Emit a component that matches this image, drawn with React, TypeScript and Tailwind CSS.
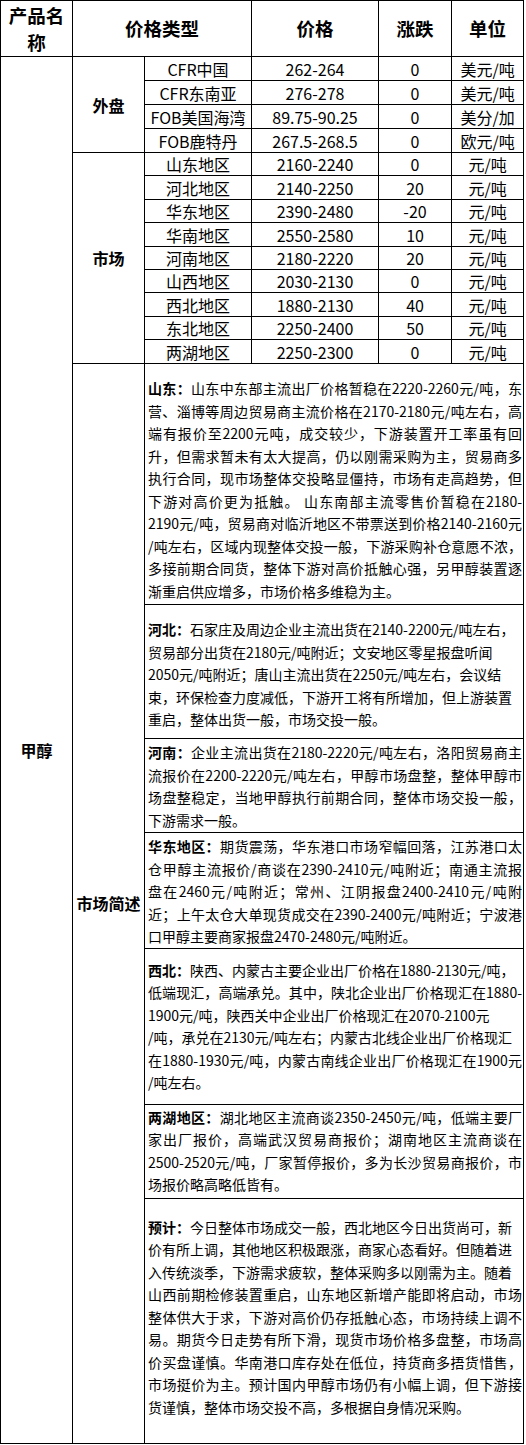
import React from "react";

type Line = [string, number];
type Para = { h: number; pt: number; label: string; lines: Line[] };

const waipan = [
  ["CFR中国", "262-264", "0", "美元/吨"],
  ["CFR东南亚", "276-278", "0", "美元/吨"],
  ["FOB美国海湾", "89.75-90.25", "0", "美分/加"],
  ["FOB鹿特丹", "267.5-268.5", "0", "欧元/吨"],
];

const shichang = [
  ["山东地区", "2160-2240", "0"],
  ["河北地区", "2140-2250", "20"],
  ["华东地区", "2390-2480", "-20"],
  ["华南地区", "2550-2580", "10"],
  ["河南地区", "2180-2220", "20"],
  ["山西地区", "2030-2130", "0"],
  ["西北地区", "1880-2130", "40"],
  ["东北地区", "2250-2400", "50"],
  ["两湖地区", "2250-2300", "0"],
];
const shichangH = [23, 24, 23, 24, 23, 23, 24, 23, 24];

const paras: Para[] = [
  {
    h: 241,
    pt: 13,
    label: "山东：",
    lines: [
      ["山东中东部主流出厂价格暂稳在2220-2260元/吨，东", 1],
      ["营、淄博等周边贸易商主流价格在2170-2180元/吨左右，高", 1],
      ["端有报价至2200元吨，成交较少，下游装置开工率虽有回", 1],
      ["升，但需求暂未有太大提高，仍以刚需采购为主，贸易商多", 1],
      ["执行合同，现市场整体交投略显僵持，市场有走高趋势，但", 1],
      ["下游对高价更为抵触。 山东南部主流零售价暂稳在2180-", 1],
      ["2190元/吨，贸易商对临沂地区不带票送到价格2140-2160元", 1],
      ["/吨左右，区域内现整体交投一般，下游采购补仓意愿不浓，", 1],
      ["多接前期合同货，整体下游对高价抵触心强，另甲醇装置逐", 1],
      ["渐重启供应增多，市场价格多维稳为主。", 0],
    ],
  },
  {
    h: 134,
    pt: 13,
    label: "河北：",
    lines: [
      ["石家庄及周边企业主流出货在2140-2200元/吨左右，", 0],
      ["贸易部分出货在2180元/吨附近；文安地区零星报盘听闻", 0],
      ["2050元/吨附近；唐山主流出货在2250元/吨左右，会议结", 0],
      ["束，环保检查力度减低，下游开工将有所增加，但上游装置", 0],
      ["重启，整体出货一般，市场交投一般。", 0],
    ],
  },
  {
    h: 94,
    pt: 2,
    label: "河南：",
    lines: [
      ["企业主流出货在2180-2220元/吨左右，洛阳贸易商主", 1],
      ["流报价在2200-2220元/吨左右，甲醇市场盘整，整体甲醇市", 1],
      ["场盘整稳定，当地甲醇执行前期合同，整体市场交投一般，", 1],
      ["下游需求一般。", 0],
    ],
  },
  {
    h: 115,
    pt: 2,
    label: "华东地区：",
    lines: [
      ["期货震荡，华东港口市场窄幅回落，江苏港口太", 1],
      ["仓甲醇主流报价/商谈在2390-2410元/吨附近；南通主流报", 1],
      ["盘在2460元/吨附近；常州、江阴报盘2400-2410元/吨附", 1],
      ["近；上午太仓大单现货成交在2390-2400元/吨附近；宁波港", 1],
      ["口甲醇主要商家报盘2470-2480元/吨附近。", 0],
    ],
  },
  {
    h: 156,
    pt: 10,
    label: "西北：",
    lines: [
      ["陕西、内蒙古主要企业出厂价格在1880-2130元/吨，", 0],
      ["低端现汇，高端承兑。其中，陕北企业出厂价格现汇在1880-", 1],
      ["1900元/吨，陕西关中企业出厂价格现汇在2070-2100元", 0],
      ["/吨，承兑在2130元/吨左右；内蒙古北线企业出厂价格现汇", 0],
      ["在1880-1930元/吨，内蒙古南线企业出厂价格现汇在1900元", 1],
      ["/吨左右。", 0],
    ],
  },
  {
    h: 94,
    pt: 1,
    label: "两湖地区：",
    lines: [
      ["湖北地区主流商谈2350-2450元/吨，低端主要厂", 1],
      ["家出厂报价，高端武汉贸易商报价；湖南地区主流商谈在", 1],
      ["2500-2520元/吨，厂家暂停报价，多为长沙贸易商报价，市", 1],
      ["场报价略高略低皆有。", 0],
    ],
  },
  {
    h: 245,
    pt: 17,
    label: "预计：",
    lines: [
      ["今日整体市场成交一般，西北地区今日出货尚可，新", 0],
      ["价有所上调，其他地区积极跟涨，商家心态看好。但随着进", 0],
      ["入传统淡季，下游需求疲软，整体采购多以刚需为主。随着", 0],
      ["山西前期检修装置重启，山东地区新增产能即将启动，市场", 1],
      ["整体供大于求，下游对高价仍存抵触心态，市场持续上调不", 1],
      ["易。期货今日走势有所下滑，现货市场价格多盘整，市场高", 1],
      ["价买盘谨慎。华南港口库存处在低位，持货商多捂货惜售，", 1],
      ["市场挺价为主。预计国内甲醇市场仍有小幅上调，但下游接", 1],
      ["货谨慎，整体市场交投不高，多根据自身情况采购。", 0],
    ],
  },
];

const td = "border border-black text-center align-middle p-0";

function ParaCell({ p }: { p: Para }) {
  return (
    <td colSpan={4} className="border border-black align-top p-0" style={{ height: p.h }}>
      <div className="pl-[3px] pr-[1px] text-[14px] leading-[22.5px] text-left" style={{ paddingTop: p.pt }}>
        {p.lines.map(([t, f], i) => (
          <div
            key={i}
            className={
              f
                ? "whitespace-nowrap text-justify [text-align-last:justify]"
                : "whitespace-nowrap"
            }
          >
            {i === 0 && <b className="font-bold">{p.label}</b>}
            {t}
          </div>
        ))}
      </div>
    </td>
  );
}

export default function App() {
  return (
    <div className="bg-white w-[526px] h-[1445px] font-['Noto_Sans_CJK_SC',sans-serif] text-black">
      <table className="border-collapse table-fixed w-[523px]">
        <colgroup>
          <col className="w-[72px]" />
          <col className="w-[72px]" />
          <col className="w-[107px]" />
          <col className="w-[127px]" />
          <col className="w-[73px]" />
          <col className="w-[72px]" />
        </colgroup>
        <tbody>
          <tr className="h-[56px] text-[18.5px] font-bold leading-[27px]">
            <td className={td}>
              产品名
              <br />称
            </td>
            <td className={td} colSpan={2}>价格类型</td>
            <td className={td}>价格</td>
            <td className={td}>涨跌</td>
            <td className={td}>单位</td>
          </tr>
          {waipan.map((r, i) => (
            <tr key={"w" + i} className="h-[24px] text-[16px] leading-[20px]">
              {i === 0 && (
                <td className={td + " text-[16px] font-bold"} rowSpan={20}>
                  甲醇
                </td>
              )}
              {i === 0 && (
                <td className={td + " font-bold"} rowSpan={4}>
                  外盘
                </td>
              )}
              <td className={td}>{r[0]}</td>
              <td className={td}>{r[1]}</td>
              <td className={td}>{r[2]}</td>
              <td className={td}>{r[3]}</td>
            </tr>
          ))}
          {shichang.map((r, i) => (
            <tr key={"s" + i} className="text-[16px] leading-[20px]" style={{ height: shichangH[i] }}>
              {i === 0 && (
                <td className={td + " font-bold"} rowSpan={9}>
                  市场
                </td>
              )}
              <td className={td}>{r[0]}</td>
              <td className={td}>{r[1]}</td>
              <td className={td}>{r[2]}</td>
              <td className={td}>元/吨</td>
            </tr>
          ))}
          {paras.map((p, i) => (
            <tr key={"p" + i}>
              {i === 0 && (
                <td className={td + " text-[16px] font-bold"} rowSpan={7}>
                  市场简述
                </td>
              )}
              <ParaCell p={p} />
            </tr>
          ))}
        </tbody>
      </table>
    </div>
  );
}
